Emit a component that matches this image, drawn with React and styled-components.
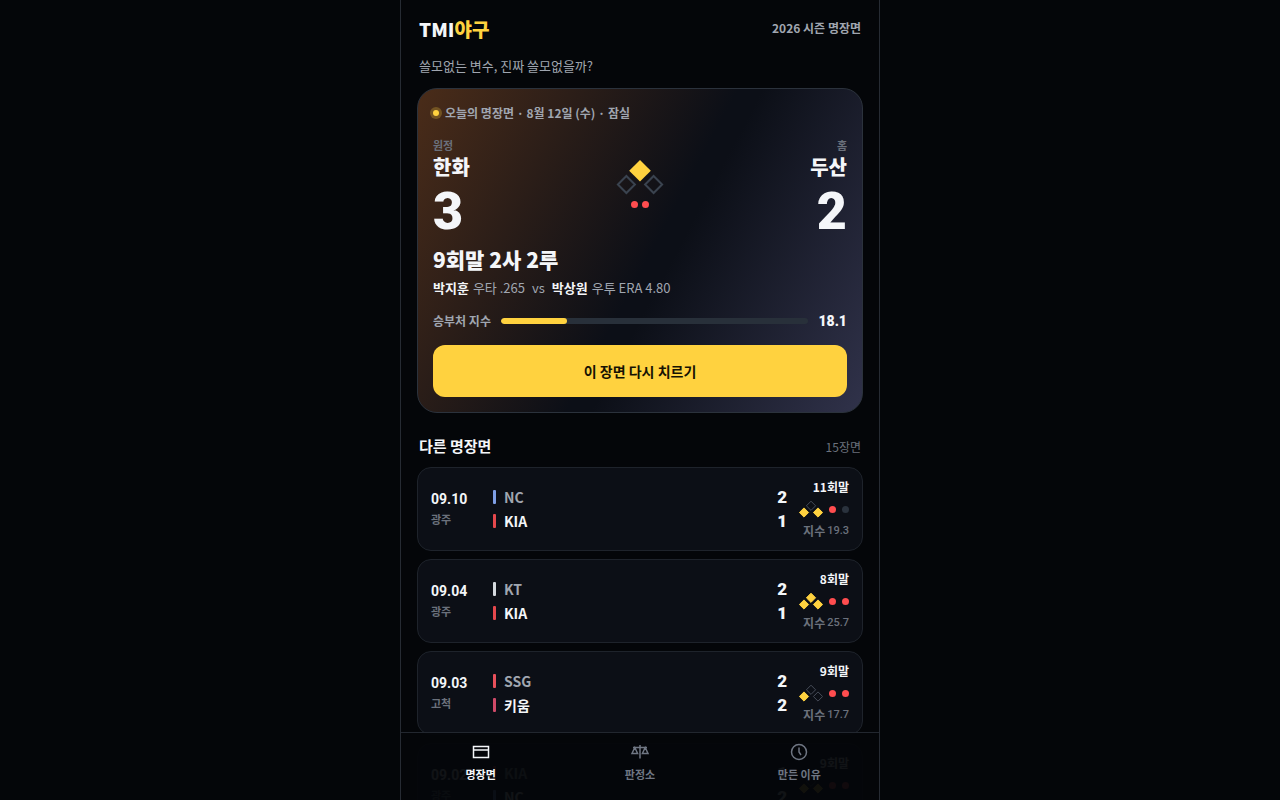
import styled, { createGlobalStyle } from "styled-components";

const GlobalStyle = createGlobalStyle`
  * {
    box-sizing: border-box;
  }

  body {
    margin: 0;
    background: #040609;
    color: #f4f6f9;
    font-family: "Noto Sans CJK KR", sans-serif;
    font-size: 14px;
    line-height: 20px;
  }

  h1, h2, h3, p, ul {
    margin: 0;
    padding: 0;
  }

  button {
    font-family: inherit;
  }
`;

const scenes = [
  {
    date: "09.10",
    park: "광주",
    away: { name: "NC", color: "#7f9fe6", score: 2 },
    home: { name: "KIA", color: "#e5484d", score: 1 },
    inning: "11회말",
    bases: [true, false, true],
    outs: 1,
    index: "19.3",
  },
  {
    date: "09.04",
    park: "광주",
    away: { name: "KT", color: "#d5d9de", score: 2 },
    home: { name: "KIA", color: "#e5484d", score: 1 },
    inning: "8회말",
    bases: [true, true, true],
    outs: 2,
    index: "25.7",
  },
  {
    date: "09.03",
    park: "고척",
    away: { name: "SSG", color: "#e8505b", score: 2 },
    home: { name: "키움", color: "#cf4a68", score: 2 },
    inning: "9회말",
    bases: [false, false, true],
    outs: 2,
    index: "17.7",
  },
  {
    date: "09.02",
    park: "광주",
    away: { name: "KIA", color: "#e5484d", score: 1 },
    home: { name: "NC", color: "#7f9fe6", score: 2 },
    inning: "9회말",
    bases: [true, false, true],
    outs: 2,
    index: "21.4",
  },
];

// bases: [first, second, third]
function Bases({ bases }) {
  const [first, second, third] = bases;
  return (
    <svg width="24" height="18" viewBox="0 0 24 18">
      <Base $on={second} d="M12 1.2 16.6 5.8 12 10.4 7.4 5.8Z" />
      <Base $on={third} d="M5 7.9 9.6 12.5 5 17.1.4 12.5Z" />
      <Base $on={first} d="M19 7.9 23.6 12.5 19 17.1 14.4 12.5Z" />
    </svg>
  );
}

function SceneRow({ scene }) {
  return (
    <li>
      <SceneButton type="button">
        <When>
          <Day>{scene.date}</Day>
          <Park>{scene.park}</Park>
        </When>
        <Teams>
          {[scene.away, scene.home].map((team, i) => (
            <TeamLine key={team.name} $home={i === 1}>
              <TeamBar $color={team.color} />
              <span>{team.name}</span>
              <LineScore>{team.score}</LineScore>
            </TeamLine>
          ))}
        </Teams>
        <Situation>
          <Inning>{scene.inning}</Inning>
          <Diamond>
            <Bases bases={scene.bases} />
            <Outs $gap={6}>
              <Out $on={scene.outs > 0} />
              <Out $on={scene.outs > 1} />
            </Outs>
          </Diamond>
          <IndexText>
            지수 <b>{scene.index}</b>
          </IndexText>
        </Situation>
      </SceneButton>
    </li>
  );
}

export default function App() {
  return (
    <Shell>
      <GlobalStyle />
      <Header>
        <Logo>
          TMI<em>야구</em>
        </Logo>
        <Season>2026 시즌 명장면</Season>
      </Header>
      <Tagline>쓸모없는 변수, 진짜 쓸모없을까?</Tagline>

      <Hero>
        <HeroLabel>
          <LiveDot />
          오늘의 명장면 · 8월 12일 (수) · 잠실
        </HeroLabel>
        <Board>
          <Side>
            <small>원정</small>
            <h3>한화</h3>
            <strong>3</strong>
          </Side>
          <Field>
            <svg width="48" height="36" viewBox="0 0 48 36">
              <path d="M24 0 34.8 10.8 24 21.6 13.2 10.8Z" fill="#ffd23f" />
              <path
                d="M10.4 16 18.9 24.5 10.4 33 1.9 24.5ZM37.6 16 46.1 24.5 37.6 33 29.1 24.5Z"
                fill="none"
                stroke="#3a434f"
                strokeWidth="2"
              />
            </svg>
            <Outs $gap={4}>
              <Out $on />
              <Out $on />
            </Outs>
          </Field>
          <Side $right>
            <small>홈</small>
            <h3>두산</h3>
            <strong>2</strong>
          </Side>
        </Board>
        <Moment>9회말 2사 2루</Moment>
        <Matchup>
          <b>박지훈</b>
          <span>우타 .265</span>
          <Versus>vs</Versus>
          <b>박상원</b>
          <span>우투 ERA 4.80</span>
        </Matchup>
        <Gauge>
          <span>승부처 지수</span>
          <Track>
            <Fill style={{ width: "21.5%" }} />
          </Track>
          <GaugeValue>18.1</GaugeValue>
        </Gauge>
        <PlayButton type="button">이 장면 다시 치르기</PlayButton>
      </Hero>

      <SectionHead>
        <h2>다른 명장면</h2>
        <span>15장면</span>
      </SectionHead>
      <SceneList>
        {scenes.map((scene) => (
          <SceneRow key={scene.date} scene={scene} />
        ))}
      </SceneList>

      <TabBar>
        <TabLink href="#scenes" $active>
          <svg width="20" height="20" viewBox="0 0 20 20">
            <path d="M2.5 4.5h15v11h-15zM2.5 8h15" />
          </svg>
          명장면
        </TabLink>
        <TabLink href="#court">
          <svg width="20" height="20" viewBox="0 0 20 20">
            <path d="M10 3v13.5M3 5.5h14M4.8 5.5 2 11.5h5.6ZM15.2 5.5 12.4 11.5H18Z" />
          </svg>
          판정소
        </TabLink>
        <TabLink href="#about">
          <svg width="20" height="20" viewBox="0 0 20 20">
            <circle cx="10" cy="10" r="7.5" />
            <path d="M10 5.5V10l2 3" />
          </svg>
          만든 이유
        </TabLink>
      </TabBar>
    </Shell>
  );
}

const numeric = `"Roboto", "Noto Sans CJK KR", sans-serif`;

const Shell = styled.div`
  position: relative;
  max-width: 480px;
  height: 100vh;
  margin: 0 auto;
  padding: 16px 16px 0;
  overflow: hidden;
  border: solid #262b33;
  border-width: 0 1px;
`;

const Header = styled.header`
  display: flex;
  align-items: flex-start;
  justify-content: space-between;
  padding: 0 2px;
`;

const Logo = styled.h1`
  font-size: 19px;
  font-weight: 900;
  line-height: 26px;

  em {
    color: #ffd23f;
    font-style: normal;
  }
`;

const Season = styled.span`
  color: #a0a6b0;
  font-size: 12px;
  font-weight: 700;
  line-height: 24px;
`;

const Tagline = styled.p`
  padding: 14px 2px 12px;
  color: #a0a6b0;
  font-size: 13px;
`;

const Hero = styled.section`
  padding: 14px 15px 15px;
  border: 1px solid #2b323c;
  border-radius: 20px;
  background: linear-gradient(118deg, #4a2c19 0%, #0c0f17 52%, #0c0f17 56%, #30324a 100%);
`;

const HeroLabel = styled.p`
  display: flex;
  align-items: center;
  gap: 6px;
  color: #a0a6b0;
  font-size: 12px;
  font-weight: 700;
`;

const LiveDot = styled.i`
  width: 6px;
  height: 6px;
  border-radius: 50%;
  background: #ffd23f;
  box-shadow: 0 0 0 3px rgb(255 210 63 / 25%);
`;

const Board = styled.div`
  display: grid;
  grid-template-columns: 1fr auto 1fr;
  align-items: start;
  margin-top: 14px;
`;

const Side = styled.div`
  display: flex;
  flex-direction: column;
  align-items: ${({ $right }) => ($right ? "flex-end" : "flex-start")};

  small {
    color: #6b717c;
    font-size: 11px;
    font-weight: 700;
    line-height: 16px;
  }

  h3 {
    font-size: 20px;
    font-weight: 900;
    line-height: 28px;
  }

  strong {
    font-family: ${numeric};
    font-size: 52px;
    font-weight: 900;
    line-height: 62px;
  }
`;

const Field = styled.div`
  display: flex;
  flex-direction: column;
  align-items: center;
  gap: 5px;
  padding-top: 23px;
`;

const Outs = styled.span`
  display: inline-flex;
  gap: ${({ $gap }) => $gap}px;
`;

const Out = styled.i`
  width: 7px;
  height: 7px;
  border-radius: 50%;
  background: ${({ $on }) => ($on ? "#ff4d4f" : "#2a323d")};
`;

const Moment = styled.h2`
  margin-top: 2px;
  font-size: 21px;
  font-weight: 900;
  line-height: 28px;
`;

const Matchup = styled.p`
  display: flex;
  flex-wrap: wrap;
  column-gap: 4px;
  margin-top: 5px;
  color: #a0a6b0;
  font-size: 13px;

  b {
    color: #f4f6f9;
  }
`;

const Versus = styled.span`
  margin: 0 3px;
`;

const Gauge = styled.div`
  display: flex;
  align-items: center;
  gap: 10px;
  margin-top: 13px;
  color: #a0a6b0;
  font-size: 12px;
  font-weight: 700;
`;

const Track = styled.div`
  flex: 1;
  height: 6px;
  overflow: hidden;
  border-radius: 3px;
  background: #28303a;
`;

const Fill = styled.div`
  height: 100%;
  border-radius: 3px;
  background: #ffd23f;
`;

const GaugeValue = styled.b`
  color: #f4f6f9;
  font-family: ${numeric};
  font-size: 14px;
`;

const PlayButton = styled.button`
  width: 100%;
  height: 52px;
  margin-top: 14px;
  border: 0;
  border-radius: 12px;
  background: #ffd23f;
  color: #171203;
  font-size: 14px;
  font-weight: 700;
  cursor: pointer;
`;

const SectionHead = styled.div`
  display: flex;
  align-items: baseline;
  justify-content: space-between;
  padding: 21px 2px 9px;

  h2 {
    font-size: 15px;
    font-weight: 700;
    line-height: 24px;
  }

  span {
    color: #6b717c;
    font-size: 12px;
  }
`;

const SceneList = styled.ul`
  display: grid;
  gap: 8px;
  list-style: none;
`;

const SceneButton = styled.button`
  display: grid;
  grid-template-columns: 50px 1fr 50px;
  align-items: center;
  gap: 12px;
  width: 100%;
  padding: 9px 13px;
  border: 1px solid #1e232b;
  border-radius: 14px;
  background: #0c0f16;
  color: #f4f6f9;
  text-align: left;
  cursor: pointer;
`;

const When = styled.span`
  display: grid;
`;

const Day = styled.b`
  font-family: ${numeric};
  font-size: 14px;
  line-height: 20px;
`;

const Park = styled.span`
  color: #6b717c;
  font-size: 11px;
  font-weight: 700;
  line-height: 20px;
`;

const Teams = styled.span`
  display: grid;
`;

const TeamLine = styled.span`
  display: flex;
  align-items: center;
  gap: 8px;
  color: ${({ $home }) => ($home ? "#f4f6f9" : "#a0a6b0")};
  font-size: 14px;
  font-weight: 700;
  line-height: 24px;
`;

const TeamBar = styled.i`
  width: 3px;
  height: 14px;
  border-radius: 1px;
  background: ${({ $color }) => $color};
`;

const LineScore = styled.b`
  margin-left: auto;
  color: #f4f6f9;
  font-family: ${numeric};
  font-size: 17px;
`;

const Situation = styled.span`
  display: flex;
  flex-direction: column;
  align-items: flex-end;
`;

const Inning = styled.b`
  font-size: 12px;
  line-height: 20px;
`;

const Diamond = styled.span`
  display: flex;
  align-items: center;
  gap: 6px;
  height: 24px;
`;

const Base = styled.path`
  fill: ${({ $on }) => ($on ? "#ffd23f" : "none")};
  stroke: ${({ $on }) => ($on ? "#ffd23f" : "#464c58")};
`;

const IndexText = styled.span`
  display: flex;
  align-items: center;
  gap: 2px;
  color: #6b717c;
  font-size: 12px;
  font-weight: 700;
  line-height: 20px;
  white-space: nowrap;

  b {
    font-family: ${numeric};
    font-size: 11px;
    font-weight: 500;
  }
`;

const TabBar = styled.nav`
  position: absolute;
  right: 0;
  bottom: 0;
  left: 0;
  display: grid;
  grid-template-columns: repeat(3, 1fr);
  height: 68px;
  border-top: 1px solid #22272f;
  background: rgb(4 6 9 / 95%);
`;

const TabLink = styled.a`
  display: flex;
  flex-direction: column;
  align-items: center;
  gap: 2px;
  padding-top: 9px;
  color: ${({ $active }) => ($active ? "#f4f6f9" : "#6f7683")};
  font-size: 11px;
  font-weight: 700;
  text-decoration: none;

  svg {
    fill: none;
    stroke: currentColor;
    stroke-width: 1.5;
  }
`;
